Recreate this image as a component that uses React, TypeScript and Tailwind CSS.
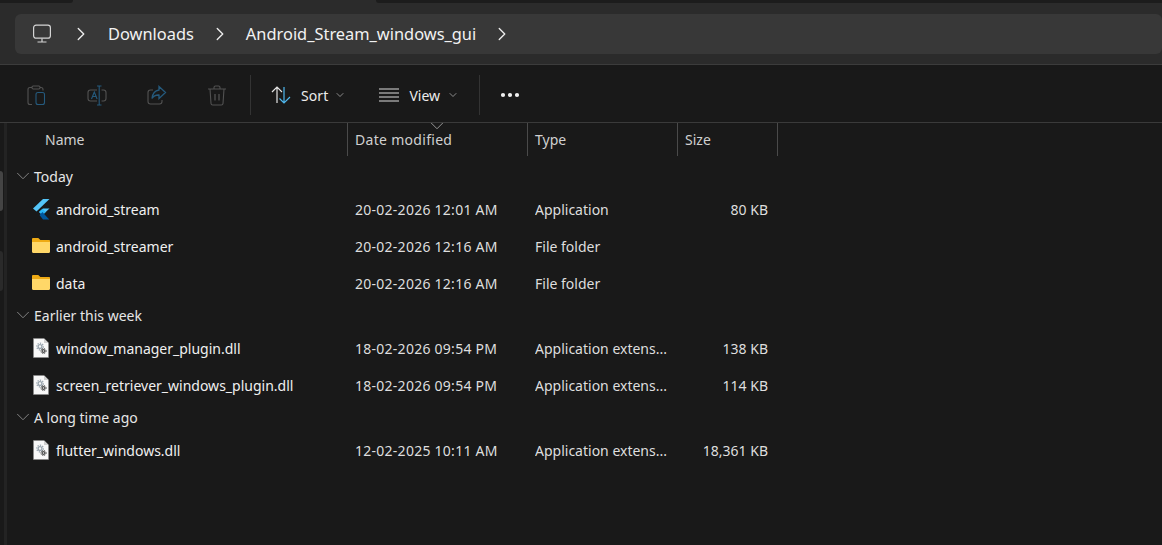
import { ChevronDown, ChevronRight, Ellipsis } from "lucide-react";

const FONT = "[font-family:'Noto_Sans',sans-serif]";

const MonitorIcon = () => (
  <svg width="20" height="20" viewBox="0 0 20 20" fill="none" stroke="#d4d4d4" strokeWidth="1.2">
    <rect x="1.6" y="1.2" width="16.8" height="13" rx="2.5" />
    <path d="M10 14.5v3M5.5 18h9" />
  </svg>
);

const FlutterIcon = () => (
  <svg width="18" height="21" viewBox="0 0 18 21">
    <path d="M11 0h6.5L4.5 12.5 1 9.500z" fill="#54c5f8" />
    <path d="M11 9.500h6.500L10.500 16 7 13z" fill="#54c5f8" />
    <path d="M7 13l3.500-3.200 3.200 3.200-3.200 3.200z" fill="#29b6f6" />
    <path d="M7.500 16l3-3 3 3.400 3.800 4H11z" fill="#01579b" />
  </svg>
);

const FolderIcon = () => (
  <svg width="18" height="15" viewBox="0 0 18 15" className="-mt-[2px]">
    <path d="M0 1.200C0 .5.5 0 1.200 0h4.600c.4 0 .7.1 1 .4L8.400 2H17c.6 0 1 .4 1 1v2H0z" fill="#eeaa14" />
    <path d="M0 4h18v9.800c0 .7-.5 1.200-1.200 1.200H1.200C.5 15 0 14.500 0 13.800z" fill="#ffd768" />
  </svg>
);

const DllIcon = () => (
  <svg width="16" height="20" viewBox="0 0 16 20" className="ml-px -mt-[2px]">
    <path d="M.5.500h10.500l4.500 4.500v14.500H.5z" fill="#f8f8f8" stroke="#8a8a8a" strokeWidth=".6" />
    <path d="M11 .5v4.500h4.500z" fill="#cfcfcf" />
    <circle cx="7" cy="8.500" r="1.900" fill="none" stroke="#98a4ae" strokeWidth="1.300" />
    <circle cx="7" cy="8.500" r="3.300" fill="none" stroke="#98a4ae" strokeWidth="1.200" strokeDasharray="1.300 1.200" />
    <circle cx="10.500" cy="13" r="1.400" fill="none" stroke="#4a4a4a" strokeWidth="1.200" />
    <circle cx="10.500" cy="13" r="2.600" fill="none" stroke="#4a4a4a" strokeWidth="1" strokeDasharray="1.100 1" />
  </svg>
);

const PasteIcon = () => (
  <svg width="20" height="21" viewBox="0 0 20 21" fill="none" strokeWidth="1.100">
    <path d="M5 19.500H3c-1.200 0-2-.8-2-2V4.500c0-1.200.8-2 2-2h2M13 2.500h1c1.200 0 2 .8 2 2v1" stroke="#525252" />
    <rect x="5" y="1" width="8" height="3" rx="1.200" stroke="#525252" />
    <rect x="9" y="7.500" width="8.500" height="12" rx="2" stroke="#255a7d" />
  </svg>
);

const RenameIcon = () => (
  <svg width="20" height="21" viewBox="0 0 20 21" fill="none" strokeWidth="1.100">
    <path d="M10 5H3.500C2 5 1 6 1 7.500v6C1 15 2 16 3.500 16H10M14.500 5h2C18 5 19 6 19 7.500v6c0 1.500-1 2.500-2.500 2.500h-2" stroke="#525252" />
    <path d="M10 1h4.500M12.200 1v19M10 20h4.500" stroke="#255a7d" />
    <path d="M4.500 14l2.800-7 2.800 7M5.500 11.500h3.600" stroke="#255a7d" />
  </svg>
);

const ShareIcon = () => (
  <svg width="20" height="21" viewBox="0 0 20 21" fill="none" strokeWidth="1.100">
    <path d="M6 5H3.500C2 5 1 6 1 7.500v9C1 18 2 19 3.500 19h9c1.500 0 2.500-1 2.500-2.500V15" stroke="#525252" />
    <path d="M12 1.500l6.500 6-6.500 6V10c-3.500-.2-5.500 1-7 3.500C5.500 9 8 5.500 12 5z" stroke="#255a7d" strokeWidth="1.300" />
  </svg>
);

const TrashIcon = () => (
  <svg width="18" height="21" viewBox="0 0 18 21" fill="none" stroke="#525252" strokeWidth="1.100">
    <path d="M0 4h18M6 4V2.500C6 1.500 6.700 1 7.500 1h3c.8 0 1.500.5 1.500 1.500V4M2 4l1 14.500c.1 1 .8 1.500 1.700 1.500h8.600c.9 0 1.600-.5 1.700-1.500L16 4" />
    <path d="M7 9v6.500M11 9v6.500" strokeWidth="1.300" />
  </svg>
);

const SortIcon = () => (
  <svg width="20" height="18" viewBox="0 0 20 18" fill="none" strokeWidth="1.200">
    <path d="M6 17V1M1 6l5-5 5 5" stroke="#e4e4e4" />
    <path d="M13 1v16M8.500 12.500l4.500 4.500 6-6" stroke="#4fb8ee" />
  </svg>
);

const ViewIcon = () => (
  <svg width="20" height="14" viewBox="0 0 20 14" fill="none" stroke="#dcdcdc" strokeWidth="1.200">
    <path d="M0 1h20M0 5h20M0 9h20M0 13h20" />
  </svg>
);

const Crumb = ({ label }: { label: string }) => (
  <>
    <span className="text-[16.4px] text-[#f2f2f2] whitespace-nowrap">{label}</span>
    <ChevronRight size={22} strokeWidth={1.500} className="text-[#ececec] mx-[15px] shrink-0" />
  </>
);

const Group = ({ label }: { label: string }) => (
  <div className="h-[28px] flex items-center pl-[12px] pb-[2px] text-[14px] text-[#e6e6e6]">
    <ChevronDown size={22} strokeWidth={1} className="text-[#8a8a8a]" />
    <span>{label}</span>
  </div>
);

interface RowProps {
  icon: React.ReactNode;
  name: string;
  date: string;
  type: string;
  size: string;
}

const Row = ({ icon, name, date, type, size }: RowProps) => (
  <div className="h-[37px] flex items-center text-[14px] text-[#dedede]">
    <div className="w-[355px] shrink-0 flex items-center">
      <div className="w-[24px] ml-[32px] shrink-0 flex">{icon}</div>
      <span className="text-[#f0f0f0] whitespace-nowrap">{name}</span>
    </div>
    <div className="w-[180px] shrink-0 whitespace-nowrap tracking-[0.26px]">{date}</div>
    <div className="w-[135px] shrink-0 whitespace-nowrap overflow-hidden">{type}</div>
    <div className="w-[98px] shrink-0 text-right whitespace-nowrap">{size}</div>
  </div>
);

export default function App() {
  return (
    <div className={`${FONT} w-[1162px] h-[545px] overflow-hidden bg-[#191919] flex flex-col`}>
      {/* address bar */}
      <div className="relative h-[65px] shrink-0 bg-[#2b2b2b] border-b border-[#3c3c3c] pt-[14px] pl-[15px]">
        <div className="absolute top-0 left-0 w-[73px] h-[3px] rounded-br bg-[#1c1c1c]" />
        <div className="absolute top-0 left-[376px] right-0 h-[3px] rounded-bl bg-[#1c1c1c]" />
        <div className="h-[40px] rounded-md bg-[#383838] flex items-center pl-[17px]">
          <span className="mr-[18px] flex">
            <MonitorIcon />
          </span>
          <ChevronRight size={22} strokeWidth={1.500} className="text-[#ececec] mr-[16px] shrink-0" />
          <Crumb label="Downloads" />
          <Crumb label="Android_Stream_windows_gui" />
        </div>
      </div>

      {/* command bar */}
      <div className="h-[58px] shrink-0 border-b border-[#3a3a3a] flex items-center pl-[27px] pt-[3px] text-[14px] text-[#ececec]">
        <div className="w-[60px] flex"><PasteIcon /></div>
        <div className="w-[60px] flex"><RenameIcon /></div>
        <div className="w-[61px] flex"><ShareIcon /></div>
        <div className="w-[42px] flex"><TrashIcon /></div>
        <div className="w-px h-[40px] bg-[#333333] mr-[20px]" />
        <SortIcon />
        <span className="ml-[10px] tracking-[0.1px]">Sort</span>
        <ChevronDown size={12} strokeWidth={1.300} className="ml-[6px] mr-[33px] text-[#c8c8c8]" />
        <ViewIcon />
        <span className="ml-[10px]">View</span>
        <ChevronDown size={12} strokeWidth={1.300} className="ml-[7px] mr-[20px] text-[#c8c8c8]" />
        <div className="w-px h-[40px] bg-[#333333] mr-[18px]" />
        <Ellipsis size={24} strokeWidth={2.200} className="text-[#f0f0f0]" />
      </div>

      <div className="flex-1 flex">
        {/* left edge of the nav pane */}
        <div className="w-[4px] shrink-0 pt-[48px]">
          <div className="w-[3px] h-[40px] rounded-r-sm bg-[#444444]" />
          <div className="w-[3px] h-[40px] mt-[40px] rounded-r-sm bg-[#2a2a2a]" />
        </div>
        <div className="w-[3px] shrink-0 bg-[#232323]" />

        <div className="flex-1">
          {/* column headers */}
          <div className="relative h-[33px] flex text-[14px] text-[#d0d0d0]">
            <div className="w-[341px] pl-[38px] pt-[6px] border-r border-[#4a4a4a]">Name</div>
            <div className="w-[180px] pl-[7px] pt-[6px] border-r border-[#4a4a4a] tracking-[0.3px]">Date modified</div>
            <div className="w-[150px] pl-[7px] pt-[6px] border-r border-[#4a4a4a]">Type</div>
            <div className="w-[100px] pl-[7px] pt-[6px] border-r border-[#4a4a4a]">Size</div>
            <ChevronDown size={22} strokeWidth={1} className="absolute left-[419px] -top-[8px] text-[#a0a0a0]" />
          </div>

          <div className="mt-[7px] -ml-[7px]">
            <Group label="Today" />
            <Row icon={<FlutterIcon />} name="android_stream" date="20-02-2026 12:01 AM" type="Application" size="80 KB" />
            <Row icon={<FolderIcon />} name="android_streamer" date="20-02-2026 12:16 AM" type="File folder" size="" />
            <Row icon={<FolderIcon />} name="data" date="20-02-2026 12:16 AM" type="File folder" size="" />
            <Group label="Earlier this week" />
            <Row icon={<DllIcon />} name="window_manager_plugin.dll" date="18-02-2026 09:54 PM" type="Application extens..." size="138 KB" />
            <Row icon={<DllIcon />} name="screen_retriever_windows_plugin.dll" date="18-02-2026 09:54 PM" type="Application extens..." size="114 KB" />
            <Group label="A long time ago" />
            <Row icon={<DllIcon />} name="flutter_windows.dll" date="12-02-2025 10:11 AM" type="Application extens..." size="18,361 KB" />
          </div>
        </div>
      </div>
    </div>
  );
}
